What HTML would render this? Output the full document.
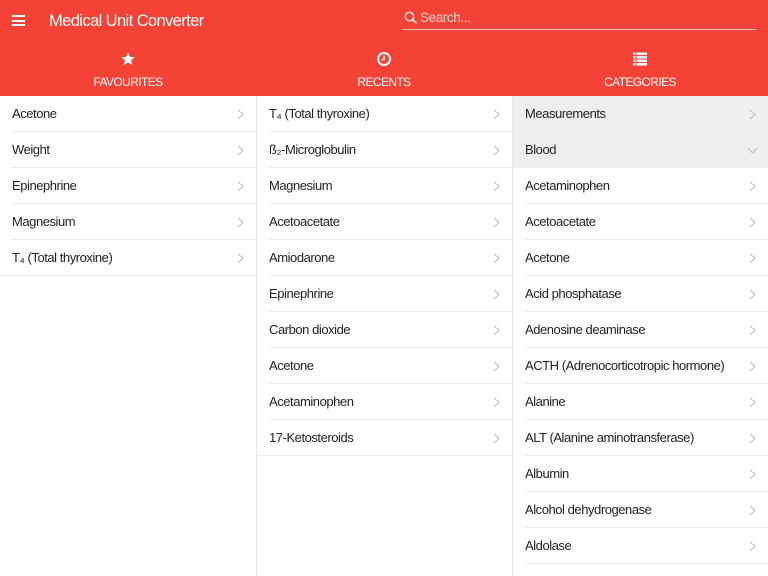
<!DOCTYPE html>
<html><head><meta charset="utf-8"><style>
*{margin:0;padding:0;box-sizing:border-box}
body{width:768px;height:576px;overflow:hidden;background:#fff;font-family:"Liberation Sans",sans-serif;position:relative}
.hdr{position:absolute;left:0;top:0;width:768px;height:96px;background:#f44336;color:#fff}
.title{position:absolute;left:49px;top:12px;font-size:16.5px;letter-spacing:-0.6px}
.menu{position:absolute;left:12px;top:15px;width:13px;height:11px}
.menu i{display:block;height:2px;background:#fff;margin-bottom:2.5px}
.search{position:absolute;left:402px;top:8px;width:354px;height:22px;border-bottom:1px solid rgba(255,255,255,.7)}
.search span{position:absolute;left:18px;top:2px;font-size:13.5px;letter-spacing:-0.4px;color:rgba(255,255,255,.75)}
.tab{position:absolute;top:51px;width:256px;text-align:center;font-size:12px;letter-spacing:-0.6px}
.tab svg{display:block;margin:0 auto 8px}
.col{position:absolute;top:96px;width:256px;bottom:0}
.col+.col{border-left:1px solid #e6e6e6}
.row{height:36px;position:relative;font-size:13px;letter-spacing:-0.45px;color:#222;line-height:36px;padding-left:12px}
.row:after{content:"";position:absolute;left:12px;right:0;bottom:0;border-bottom:1px solid #ececec}
.row.last:after{left:0}
.row.g{background:#efefef}
.row svg{position:absolute;right:12px;top:13px}
.row svg path{stroke:#bbb;stroke-width:1.1}
</style></head><body>
<div class="hdr">
<div class="menu"><i></i><i></i><i></i></div>
<div class="title">Medical Unit Converter</div>
<div class="search"><svg width="14" height="14" viewBox="0 0 14 14" style="position:absolute;left:2px;top:3px"><circle cx="5.5" cy="5.5" r="4.2" fill="none" stroke="#fff" stroke-width="1.5" opacity=".85"/><path d="M8.5 8.5L12.5 12.5" stroke="#fff" stroke-width="1.6" opacity=".85"/></svg><span>Search...</span></div>
<div class="tab" style="left:0"><svg width="16" height="16" viewBox="0 0 24 24"><path fill="#fff" d="M12 17.3l6.2 3.7-1.6-7 5.4-4.7-7.2-.6L12 2 9.2 8.7 2 9.3l5.4 4.7-1.6 7z"/></svg>FAVOURITES</div>
<div class="tab" style="left:256px"><svg width="16" height="16" viewBox="0 0 16 16"><circle cx="8" cy="8" r="6" fill="none" stroke="#fff" stroke-width="2"/><path d="M8 4.5V8.5H5.5" fill="none" stroke="#fff" stroke-width="1.6"/></svg>RECENTS</div>
<div class="tab" style="left:512px"><svg width="16" height="16" viewBox="0 0 16 16" fill="#fff"><rect x="1" y="1.5" width="2.5" height="2.5"/><rect x="4.5" y="1.5" width="10.5" height="2.5"/><rect x="1" y="5" width="2.5" height="2.5"/><rect x="4.5" y="5" width="10.5" height="2.5"/><rect x="1" y="8.5" width="2.5" height="2.5"/><rect x="4.5" y="8.5" width="10.5" height="2.5"/><rect x="1" y="12" width="2.5" height="2.5"/><rect x="4.5" y="12" width="10.5" height="2.5"/></svg>CATEGORIES</div>
</div>
<div class="col" style="left:0">
<div class="row">Acetone<svg width="7" height="11"><path d="M1 1l5 4.5L1 10" fill="none"/></svg></div>
<div class="row">Weight<svg width="7" height="11"><path d="M1 1l5 4.5L1 10" fill="none"/></svg></div>
<div class="row">Epinephrine<svg width="7" height="11"><path d="M1 1l5 4.5L1 10" fill="none"/></svg></div>
<div class="row">Magnesium<svg width="7" height="11"><path d="M1 1l5 4.5L1 10" fill="none"/></svg></div>
<div class="row last">T₄ (Total thyroxine)<svg width="7" height="11"><path d="M1 1l5 4.5L1 10" fill="none"/></svg></div>
</div>
<div class="col" style="left:256px">
<div class="row">T₄ (Total thyroxine)<svg width="7" height="11"><path d="M1 1l5 4.5L1 10" fill="none"/></svg></div>
<div class="row">ß₂-Microglobulin<svg width="7" height="11"><path d="M1 1l5 4.5L1 10" fill="none"/></svg></div>
<div class="row">Magnesium<svg width="7" height="11"><path d="M1 1l5 4.5L1 10" fill="none"/></svg></div>
<div class="row">Acetoacetate<svg width="7" height="11"><path d="M1 1l5 4.5L1 10" fill="none"/></svg></div>
<div class="row">Amiodarone<svg width="7" height="11"><path d="M1 1l5 4.5L1 10" fill="none"/></svg></div>
<div class="row">Epinephrine<svg width="7" height="11"><path d="M1 1l5 4.5L1 10" fill="none"/></svg></div>
<div class="row">Carbon dioxide<svg width="7" height="11"><path d="M1 1l5 4.5L1 10" fill="none"/></svg></div>
<div class="row">Acetone<svg width="7" height="11"><path d="M1 1l5 4.5L1 10" fill="none"/></svg></div>
<div class="row">Acetaminophen<svg width="7" height="11"><path d="M1 1l5 4.5L1 10" fill="none"/></svg></div>
<div class="row last">17-Ketosteroids<svg width="7" height="11"><path d="M1 1l5 4.5L1 10" fill="none"/></svg></div>
</div>
<div class="col" style="left:512px">
<div class="row g">Measurements<svg width="7" height="11"><path d="M1 1l5 4.5L1 10" fill="none"/></svg></div>
<div class="row g">Blood<svg width="11" height="7" style="top:15px;right:10px"><path d="M1 1l4.5 5L10 1" fill="none"/></svg></div>
<div class="row">Acetaminophen<svg width="7" height="11"><path d="M1 1l5 4.5L1 10" fill="none"/></svg></div>
<div class="row">Acetoacetate<svg width="7" height="11"><path d="M1 1l5 4.5L1 10" fill="none"/></svg></div>
<div class="row">Acetone<svg width="7" height="11"><path d="M1 1l5 4.5L1 10" fill="none"/></svg></div>
<div class="row">Acid phosphatase<svg width="7" height="11"><path d="M1 1l5 4.5L1 10" fill="none"/></svg></div>
<div class="row">Adenosine deaminase<svg width="7" height="11"><path d="M1 1l5 4.5L1 10" fill="none"/></svg></div>
<div class="row">ACTH (Adrenocorticotropic hormone)<svg width="7" height="11"><path d="M1 1l5 4.5L1 10" fill="none"/></svg></div>
<div class="row">Alanine<svg width="7" height="11"><path d="M1 1l5 4.5L1 10" fill="none"/></svg></div>
<div class="row">ALT (Alanine aminotransferase)<svg width="7" height="11"><path d="M1 1l5 4.5L1 10" fill="none"/></svg></div>
<div class="row">Albumin<svg width="7" height="11"><path d="M1 1l5 4.5L1 10" fill="none"/></svg></div>
<div class="row">Alcohol dehydrogenase<svg width="7" height="11"><path d="M1 1l5 4.5L1 10" fill="none"/></svg></div>
<div class="row">Aldolase<svg width="7" height="11"><path d="M1 1l5 4.5L1 10" fill="none"/></svg></div>
</div>
</body></html>
